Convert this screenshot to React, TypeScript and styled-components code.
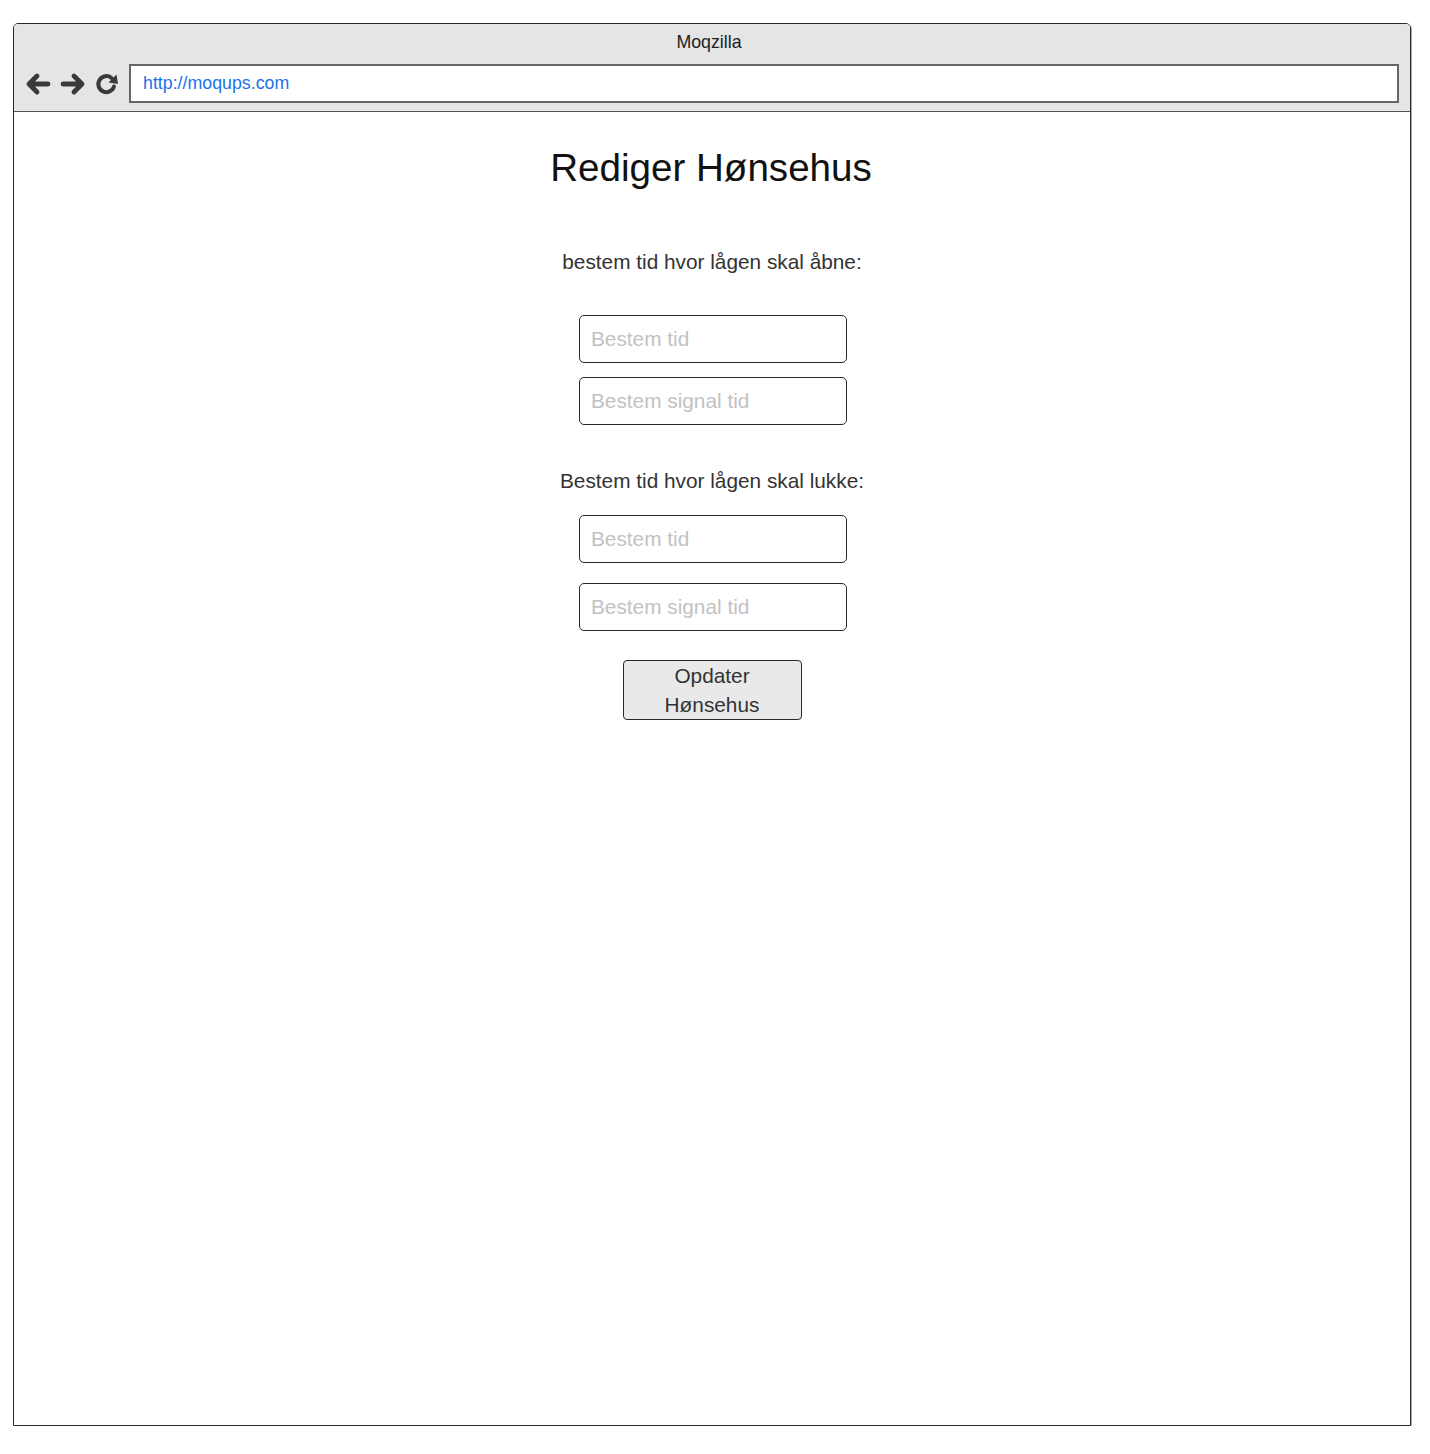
import React from "react";
import styled, { createGlobalStyle } from "styled-components";

const Global = createGlobalStyle`
  html, body { margin: 0; padding: 0; background: #fff; }
  body { font-family: "Liberation Sans", Arial, sans-serif; }
`;

const Frame = styled.div`
  margin: 23px 0 0 13px;
  width: 1398px;
  height: 1403px;
  box-sizing: border-box;
  border: 1.5px solid #2a2a2a;
  border-radius: 5px 5px 0 0;
  box-shadow: 1px 1px 0 #aaa;
  display: flex;
  flex-direction: column;
  overflow: hidden;
`;

const Header = styled.div`
  height: 88px;
  box-sizing: border-box;
  background: #e5e5e5;
  border-bottom: 1px solid #555;
  display: flex;
  flex-direction: column;
`;

const WindowTitle = styled.div`
  text-align: center;
  font-size: 17.8px;
  color: #222;
  padding-top: 8px;
  height: 30px;
  box-sizing: border-box;
  padding-right: 6px;
`;

const NavRow = styled.div`
  display: flex;
  align-items: center;
  padding: 10px 11px 0 10px;
`;

const Icons = styled.div`
  display: flex;
  align-items: center;
  gap: 7px;
  width: 105px;
`;

const UrlBar = styled.div`
  flex: 1;
  height: 39px;
  box-sizing: border-box;
  border: 2px solid #666;
  background: #fff;
  display: flex;
  align-items: center;
  padding-left: 12px;
  font-size: 17.8px;
  color: #1a73e8;
`;

const Content = styled.div`
  flex: 1;
  display: flex;
  flex-direction: column;
  align-items: center;
  padding-top: 33px;
`;

const Title = styled.h1`
  margin: 0;
  font-weight: normal;
  font-size: 38.6px;
  color: #111;
  line-height: 46px;
  margin-right: 2px;
`;

const Label = styled.div<{ $top: number }>`
  margin-top: ${(p) => p.$top}px;
  font-size: 20.8px;
  color: #333;
  line-height: 24px;
`;

const Field = styled.div<{ $top: number }>`
  margin-top: ${(p) => p.$top}px;
  margin-left: 2px;
  width: 268px;
  height: 48px;
  box-sizing: border-box;
  border: 1.5px solid #2a2a2a;
  border-radius: 5px;
  display: flex;
  align-items: center;
  padding-left: 11px;
  font-size: 20.8px;
  color: #c2c2c2;
`;

const Button = styled.div`
  margin-top: 29px;
  width: 179px;
  height: 60px;
  box-sizing: border-box;
  border: 1.5px solid #2a2a2a;
  border-radius: 4px;
  background: #e9e9e9;
  display: flex;
  align-items: center;
  justify-content: center;
  text-align: center;
  font-size: 20.8px;
  line-height: 29px;
  color: #333;
`;

const Back = () => (
  <svg width="28" height="28" viewBox="0 0 28 28">
    <path d="M24 14H6M13 6l-8 8 8 8" fill="none" stroke="#3a3a3a" strokeWidth="4.8" strokeLinecap="round" strokeLinejoin="round" />
  </svg>
);
const Fwd = () => (
  <svg width="28" height="28" viewBox="0 0 28 28">
    <path d="M4 14h18M15 6l8 8-8 8" fill="none" stroke="#3a3a3a" strokeWidth="4.8" strokeLinecap="round" strokeLinejoin="round" />
  </svg>
);
const Reload = () => (
  <svg width="26" height="26" viewBox="0 0 26 26">
    <path d="M20 15.5A8 8 0 1 1 17.5 7" fill="none" stroke="#3a3a3a" strokeWidth="4" strokeLinecap="round" />
    <path d="M14.5 11.5L24 13l-1.5-9.5z" fill="#3a3a3a" />
  </svg>
);

export default function App() {
  return (
    <>
      <Global />
      <Frame>
        <Header>
          <WindowTitle>Moqzilla</WindowTitle>
          <NavRow>
            <Icons>
              <Back />
              <Fwd />
              <Reload />
            </Icons>
            <UrlBar>http://moqups.com</UrlBar>
          </NavRow>
        </Header>
        <Content>
          <Title>Rediger Hønsehus</Title>
          <Label $top={59}>bestem tid hvor lågen skal åbne:</Label>
          <Field $top={41}>Bestem tid</Field>
          <Field $top={14}>Bestem signal tid</Field>
          <Label $top={44}>Bestem tid hvor lågen skal lukke:</Label>
          <Field $top={22}>Bestem tid</Field>
          <Field $top={20}>Bestem signal tid</Field>
          <Button>Opdater<br />Hønsehus</Button>
        </Content>
      </Frame>
    </>
  );
}
